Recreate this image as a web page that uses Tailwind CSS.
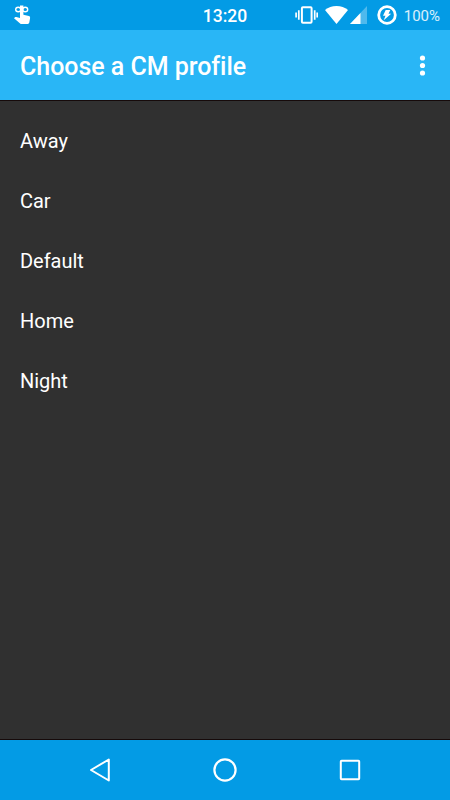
<!DOCTYPE html>
<html lang="en">
<head>
    <meta charset="UTF-8">
    <meta name="viewport" content="width=device-width, initial-scale=1.0">
    <title>Choose a CM profile</title>
    <script src="https://cdn.jsdelivr.net/npm/@tailwindcss/browser@4"></script>
</head>
<body class="bg-[#303030] font-[Roboto,sans-serif] text-white">
    <div class="flex flex-col w-[450px] h-[800px] overflow-hidden">
        <!-- Status bar -->
        <div class="relative flex items-center justify-between h-[30px] shrink-0 bg-[#039be5] pl-[13px] pr-[10px]">
            <svg class="w-[19px] h-[20px]" viewBox="0 0 19 20" fill="#fff">
                <path d="M7 .5h3.400v9.200l5.500 1.300c1 .3 1.300 1 1.200 1.900l-.8 4.700c-.2.900-.7 1.400-1.600 1.400H8.500c-.6 0-1-.2-1.400-.6L1 13.200l1-1c.4-.3.800-.4 1.300-.2L7 12.900z"/>
                <g fill="none" stroke="#fff" stroke-width="1.400">
                    <ellipse cx="5.200" cy="4.500" rx="2.500" ry="2.200"/>
                    <ellipse cx="12.200" cy="4.500" rx="2.500" ry="2.200"/>
                </g>
            </svg>

            <span class="absolute inset-x-0 top-px text-center text-[17.5px] leading-[30px] font-medium">13:20</span>

            <div class="flex items-center">
                <!-- Vibrate -->
                <svg class="w-[23px] h-[18px] mr-[7px]" viewBox="0 0 23 18" fill="none" stroke="#fff">
                    <rect x="6.900" y="1.300" width="9.700" height="15.400" rx="1" stroke-width="2"/>
                    <path d="M3.800 4.300v9.400M19.700 4.300v9.400M1.100 6.500v5M22.200 6.500v5" stroke-width="1.700"/>
                </svg>
                <!-- Wifi -->
                <svg class="w-[23px] h-[18px] mr-[2px]" viewBox="0 0 23 18" fill="#fff">
                    <path d="M0 4C3.300 1.500 7 0 11.500 0S19.700 1.500 23 4L11.500 18z"/>
                </svg>
                <!-- Signal -->
                <svg class="w-[17px] h-[18px] mr-[10px]" viewBox="0 0 17 18" fill="#fff">
                    <path d="M17 0v18H0z" fill-opacity=".3"/>
                    <path d="M10.500 7v11H0z"/>
                </svg>
                <!-- Battery -->
                <svg class="w-[20px] h-[20px] mr-[7px]" viewBox="0 0 20 20" fill="#fff">
                    <circle cx="10" cy="10" r="8.300" fill="none" stroke="#fff" stroke-width="2.800"/>
                    <path d="M8.700 5h4.600l-1.800 3.700h2.700L6.700 15.200l1.800-4.400H6z"/>
                </svg>
                <span class="text-[15px] leading-[30px] pt-px text-white/85">100%</span>
            </div>
        </div>

        <!-- Toolbar -->
        <header class="flex items-center justify-between h-[70px] shrink-0 bg-[#29b6f6] pl-5 pr-[24px]">
            <h1 class="text-[25px] font-medium leading-[66px] pt-[4px] tracking-[-0.04px]">Choose a CM profile</h1>
            <svg class="w-[7px] h-[21px]" viewBox="0 0 7 21" fill="#fff">
                <circle cx="3.500" cy="3" r="2.600"/>
                <circle cx="3.500" cy="10.500" r="2.600"/>
                <circle cx="3.500" cy="18" r="2.600"/>
            </svg>
        </header>

        <!-- Profiles -->
        <ul class="flex-1 border-y border-[#160a0a] pt-[10px] px-5 text-[20px] leading-[60px] tracking-[-0.02px]">
            <li class="h-[60px]">Away</li>
            <li class="h-[60px]">Car</li>
            <li class="h-[60px]">Default</li>
            <li class="h-[60px]">Home</li>
            <li class="h-[60px]">Night</li>
        </ul>

        <!-- Navigation bar -->
        <nav class="flex items-center justify-center gap-[101px] h-[60px] shrink-0 bg-[#039be5]">
            <svg class="w-[24px] h-[24px]" viewBox="0 0 24 24" fill="none" stroke="#fff" stroke-width="2" stroke-linejoin="round">
                <path d="M20.800 1.500v21L3 12z"/>
            </svg>
            <svg class="w-[24px] h-[24px]" viewBox="0 0 24 24" fill="none" stroke="#fff" stroke-width="2.200">
                <circle cx="12" cy="12" r="10.600"/>
            </svg>
            <svg class="w-[24px] h-[24px]" viewBox="0 0 24 24" fill="none" stroke="#fff" stroke-width="2" stroke-linejoin="round">
                <rect x="2.800" y="2.700" width="18.400" height="18.600" rx=".8"/>
            </svg>
        </nav>
    </div>
</body>
</html>
